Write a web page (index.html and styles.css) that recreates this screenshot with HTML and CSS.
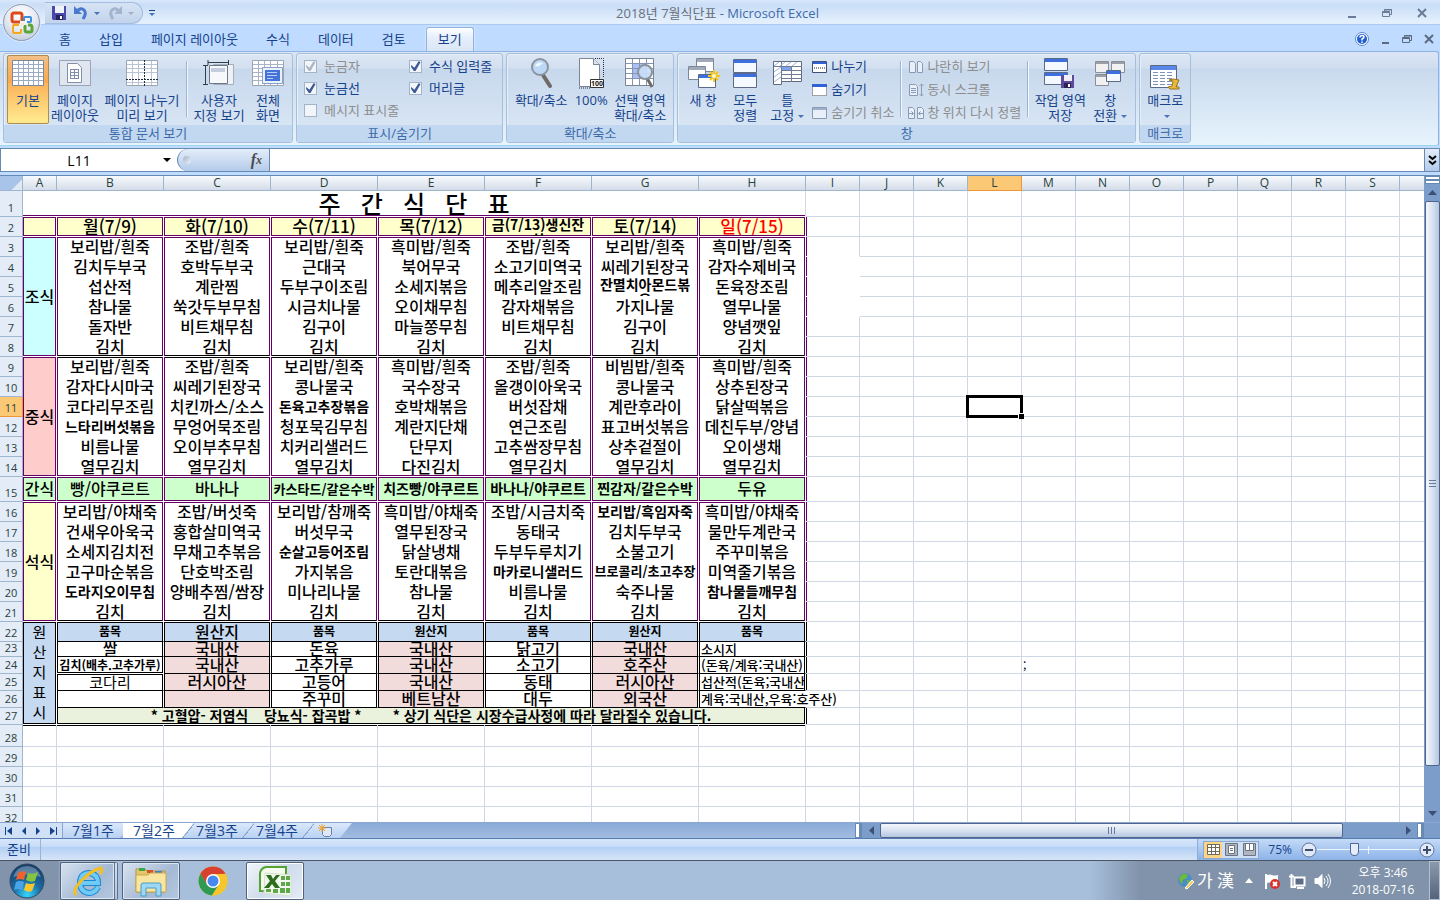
FILE: index.html
```html
<!DOCTYPE html>
<html lang="ko">
<head>
    <meta charset="UTF-8">
    <meta name="viewport" content="width=device-width, initial-scale=1.0">
    <title>2018년 7월식단표 - Microsoft Excel</title>
    <link rel="stylesheet" href="styles.css">
</head>
<body>
    <!-- Title bar -->
    <header class="titlebar">
        <button class="office" aria-label="Office 단추">
            <svg width="24" height="24" viewBox="0 0 24 24" fill="none">
                <path d="M10 11H4q-2 0-2-2V4q0-2 2-2h6q2 0 2 2v6" stroke="#dc4a1a" stroke-width="3"/>
                <path d="M14 10V7q0-1 1-1h5q1 0 1 1v3q0 1-1 1h-3" stroke="#3f8fd8" stroke-width="2"/>
                <path d="M9 14H4q-1 0-1 1v6q0 1 1 1h6q1 0 1-1v-3" stroke="#f6a81d" stroke-width="2"/>
                <path d="M15 14v5q0 2 2 2h3q2 0 2-2v-3q0-2-2-2h-2" stroke="#5ba63a" stroke-width="3"/>
                <path d="M11 12h3v3h-3z" fill="#f8e8c0"/>
            </svg>
        </button>
        <div class="quick">
            <button aria-label="저장"><svg width="14" height="14"><path d="M0 0h14v14H1L0 13z" fill="#4b49a8"/><path d="M3 0h9v7H3z" fill="#eef2fb"/><path d="M4 9h7v5H4z" fill="#22225c"/><path d="M8 10h2v3H8z" fill="#fff"/></svg></button>
            <button class="undo" aria-label="실행 취소"><svg width="14" height="14" fill="none"><path d="M3 5q4-4 7-1t-1 9" stroke="#4a78cf" stroke-width="3"/><path d="M0 0v8h8z" fill="#4a78cf"/></svg></button>
            <span class="caret"></span>
            <button class="redo" aria-label="다시 실행"><svg width="14" height="14" fill="none"><path d="M11 5Q7 1 4 4t1 9" stroke="#a3b4cc" stroke-width="3"/><path d="M14 0v8H6z" fill="#a3b4cc"/></svg></button>
            <span class="caret off"></span>
        </div>
        <button class="customize" aria-label="빠른 실행 도구 모음 사용자 지정"><i></i><span class="caret"></span></button>
        <h1><span>2018년 7월식단표</span> - Microsoft Excel</h1>
        <div class="winbtns">
            <button aria-label="최소화"><svg width="12" height="12"><path d="M2 9h8v2H2z" fill="#6b7c96"/></svg></button>
            <button aria-label="복원"><svg width="12" height="12" fill="none" stroke="#6b7c96"><path d="M3.500 4V2.500h7v5H9M1.500 4.500h7v5h-7zM1 5.500h8M3 3h8"/></svg></button>
            <button aria-label="닫기"><svg width="12" height="12"><path d="M2 2l8 8M10 2l-8 8" stroke="#6b7c96" stroke-width="2"/></svg></button>
        </div>
    </header>

    <!-- Ribbon tabs -->
    <nav class="tabs">
        <button>홈</button>
        <button>삽입</button>
        <button>페이지 레이아웃</button>
        <button>수식</button>
        <button>데이터</button>
        <button>검토</button>
        <button class="active">보기</button>
        <div class="docbtns">
            <button aria-label="도움말"><svg width="14" height="14"><circle cx="7" cy="7" r="6.500" fill="#fff" stroke="#5a86c8"/><circle cx="7" cy="7" r="5" fill="#1f5fd0"/><path d="M5 5.500q0-2 2-2t2 1.500Q9 6 7 7v1.500M7 9.500V11" stroke="#fff" stroke-width="1.500" fill="none"/></svg></button>
            <button aria-label="창 최소화"><svg width="12" height="12"><path d="M3 9h7v2H3z" fill="#5c6a80"/></svg></button>
            <button aria-label="창 복원"><svg width="12" height="12" fill="none" stroke="#5c6a80"><path d="M3.500 4V2.500h7v5H9M1.500 4.500h7v5h-7zM1 5.500h8M3 3h8"/></svg></button>
            <button aria-label="창 닫기"><svg width="12" height="12"><path d="M2 2l8 8M10 2l-8 8" stroke="#5c6a80" stroke-width="2"/></svg></button>
        </div>
    </nav>

    <!-- Ribbon -->
    <section class="ribbon">
        <div class="group">
            <div class="tools">
                <button class="big pressed w42">
                    <svg width="32" height="32"><path d="M.5 2.500h31v25H.5z" fill="#fff" stroke="#7c8798"/><path d="M1 6.500h30M1 10.500h30M1 14.500h30M1 18.500h30M1 22.500h30M6.500 3v24M11.500 3v24M16.500 3v24M21.500 3v24M26.500 3v24" stroke="#9aa9c4"/></svg>
                    <span>기본</span></button>
                <button class="big w52">
                    <svg width="32" height="32"><path d="M.5 2.500h31v25H.5z" fill="#dfe6f0" stroke="#9aa4b4"/><path d="M8.500 5.500h10l4 4v15h-14z" fill="#fff" stroke="#8390a6"/><path d="M11 11.500h9M11 14.500h9M11 17.500h9M11 20.500h9M11.500 11v10M15.500 11v10M19.500 11v10" stroke="#7f8ea8"/></svg>
                    <span>페이지<br>레이아웃</span></button>
                <button class="big w82">
                    <svg width="32" height="32"><path d="M.5 2.500h31v25H.5z" fill="#fff" stroke="#9aa4b4"/><path d="M1 6.500h30M1 10.500h30M1 14.500h30M1 24.500h30M6.500 3v24M12.500 3v24M25.500 3v24" stroke="#b9c4d6"/><path d="M18.500 2v26M0 21.500h32" stroke="#222c3c" stroke-dasharray="2 1"/></svg>
                    <span>페이지 나누기<br>미리 보기</span></button>
                <span class="sep"></span>
                <button class="big w56">
                    <svg width="32" height="32"><path d="M10.500 6.500h20v20h-20z" fill="#eef1f6" stroke="#a5adba"/><path d="M6.500 7.500h18v18h-18z" fill="#f6f8fb" stroke="#6d7888"/><path d="M8 10h14v4H8z" fill="#c3cddd"/><path d="M5 4.500h20M5 2v5M25.500 2v5M2.500 7v20M0 7.500h5M0 26.500h5" stroke="#333c4a"/></svg>
                    <span>사용자<br>지정 보기</span></button>
                <button class="big w42">
                    <svg width="32" height="32"><path d="M.5 2.500h31v25H.5z" fill="#fff" stroke="#9aa4b4"/><path d="M1 6.500h30M1 10.500h30M1 14.500h30M1 18.500h30M1 22.500h30M6.500 3v24M12.500 3v24M18.500 3v24M25.500 3v24" stroke="#a9b4c6"/><path d="M10.500 9.500h20v16h-20z" fill="#e9f1fd" stroke="#8aa0c4"/><path d="M13 12h15v11H13z" fill="#4474d8"/><path d="M15 14.500h10M15 17.500h10M15 20.500h6" stroke="#b8cef8"/></svg>
                    <span>전체<br>화면</span></button>
            </div>
            <h2>통합 문서 보기</h2>
        </div>

        <div class="group">
            <div class="tools checks">
                <label class="off"><input type="checkbox" checked disabled>눈금자</label>
                <label><input type="checkbox" checked>수식 입력줄</label>
                <label><input type="checkbox" checked>눈금선</label>
                <label><input type="checkbox" checked>머리글</label>
                <label class="off"><input type="checkbox" disabled>메시지 표시줄</label>
            </div>
            <h2>표시/숨기기</h2>
        </div>

        <div class="group">
            <div class="tools">
                <button class="big w62">
                    <svg width="32" height="32"><path d="M18 17l7 11" stroke="#6e6a68" stroke-width="4" stroke-linecap="round"/><circle cx="15" cy="9" r="8" fill="#bcd8f6" stroke="#8b939e" stroke-width="2"/><path d="M10 8q2-5 8-3-5 5-8 3" fill="#eef6ff"/></svg>
                    <span>확대/축소</span></button>
                <button class="big w38">
                    <svg width="32" height="32"><path d="M4.500.5h14l6 6v22h-20z" fill="#fff" stroke="#7c8594"/><path d="M18.500.5v6h6" fill="#dfe5ee" stroke="#7c8594"/><path d="M20 .5h8.500v19M4 30h11" stroke="#222c3c" stroke-dasharray="1 1" fill="none"/><path d="M15.500 21.500h13v8h-13z" fill="#fff" stroke="#333"/><text x="16" y="28" font-size="7" font-weight="700" fill="#222">100</text></svg>
                    <span>100%</span></button>
                <button class="big w60">
                    <svg width="32" height="32"><path d="M1.500.5h28v27h-28z" fill="#fff" stroke="#7c8594"/><path d="M8 6h14v14H8z" fill="#a9c0f4"/><path d="M2 5.500h27M2 10.500h27M2 15.500h27M2 20.500h27M8.500 1v26M15.500 1v26M22.500 1v26" stroke="#8593b4"/><path d="M23 20l5 9" stroke="#6e6a68" stroke-width="3"/><circle cx="21" cy="14" r="7" fill="#c9dff8" fill-opacity=".9" stroke="#8b939e" stroke-width="2"/></svg>
                    <span>선택 영역<br>확대/축소</span></button>
            </div>
            <h2>확대/축소</h2>
        </div>

        <div class="group">
            <div class="tools">
                <button class="big w44">
                    <svg width="32" height="32"><g stroke="#7c8798" fill="#fff"><path d="M9.500.5h17v13h-17z"/><path d="M1.500 8.500h17v13h-17z"/></g><path d="M10 1h16v3H10zM2 9h16v3H2z" fill="#a2aab8"/><path d="M11.500 16.500h17v13h-17z" fill="#fff" stroke="#5a6a88"/><path d="M12 17h16v3H12z" fill="#3c70e0"/><path d="M27 12v12M21 18h12M23 14l8 8M31 14l-8 8" stroke="#f5c51c" stroke-width="2"/><circle cx="27" cy="18" r="2" fill="#fffbd0"/></svg>
                    <span>새 창</span></button>
                <button class="big w40">
                    <svg width="32" height="32"><path d="M4.500 1.500h23v13h-23zM4.500 15.500h23v14h-23z" fill="#f4f8ff" stroke="#5a6a88"/><path d="M5 2h22v3H5zM5 16h22v3H5z" fill="#3c70e0"/></svg>
                    <span>모두<br>정렬</span></button>
                <button class="big w44">
                    <svg width="32" height="32"><path d="M2.500 3.500h28v20h-20v3h-8z" fill="#fff" stroke="#5f6b7c"/><path d="M3 8.500h28M10.500 4v20M10.500 12.500h20M10.500 16.500h20M10.500 20.500h20M20.500 8v16" stroke="#6f7c92"/><path d="M11 9h9v3h-9z" fill="#7da3f0"/><path d="M3 8l5-4M9 8l5-4M15 8l5-4M21 8l5-4M3 14l7-5M3 19l7-5M3 24l7-5" stroke="#9db4dc"/></svg>
                    <span>틀<br>고정<i class="caret"></i></span></button>
                <div class="small">
                    <button><svg width="16" height="16"><path d="M.5 2.500h14v11H.5z" fill="#fff" stroke="#3c5078"/><path d="M1 3h13v2H1z" fill="#2f62d4"/><path d="M2 9h11" stroke="#222" stroke-dasharray="1 1"/></svg>나누기</button>
                    <button><svg width="16" height="16"><path d="M.5 2.500h14v11H.5z" fill="#fff" stroke="#555" stroke-dasharray="1 1"/><path d="M0 2h15v3H0z" fill="#2f62d4"/></svg>숨기기</button>
                    <button class="off"><svg width="16" height="16"><path d="M.5 2.500h14v11H.5z" fill="#e9eff8" stroke="#8b9ab4"/><path d="M1 3h13v2H1z" fill="#9fb0cc"/></svg>숨기기 취소</button>
                </div>
                <span class="sep"></span>
                <div class="small">
                    <button class="off"><svg width="16" height="16" fill="#e9eff8" stroke="#8b9ab4"><path d="M1.500 2.500h4l2 2v9h-6zM9.500 2.500h3l2 2v9h-5z"/></svg>나란히 보기</button>
                    <button class="off"><svg width="16" height="16" fill="#e9eff8" stroke="#8b9ab4"><path d="M1.500 2.500h6l2 2v9h-8zM3 6.500h5M3 8.500h5M3 10.500h5M13.500 2v12M11.500 4l2-2 2 2M11.500 12l2 2 2-2"/></svg>동시 스크롤</button>
                    <button class="off"><svg width="16" height="16" fill="#e9eff8" stroke="#8b9ab4"><path d="M.5 2.500h4l2 2v9h-6zM9.500 2.500h4l2 2v9h-6zM1 8.500h4M3.500 6.500l2 2-2 2M15 8.500h-4M12.500 6.500l-2 2 2 2"/></svg>창 위치 다시 정렬</button>
                </div>
                <span class="sep"></span>
                <button class="big w56">
                    <svg width="32" height="32"><path d="M.5.5h23v12H.5zM.5 14.500h23v12H.5z" fill="#f4f8ff" stroke="#5a6a88"/><path d="M1 1h22v3H1zM1 15h22v3H1z" fill="#3c70e0"/><path d="M17 17h13v13H17z" fill="#5d4a9c"/><path d="M20 17h8v6h-8z" fill="#f0eefa"/><path d="M20 25h7v5h-7z" fill="#2c2354"/><path d="M24 26h2v3h-2z" fill="#fff"/></svg>
                    <span>작업 영역<br>저장</span></button>
                <button class="big w44">
                    <svg width="32" height="32"><path d="M1.500 3.500h13v11h-13zM17.500 3.500h13v11h-13zM1.500 16.500h13v11h-13z" fill="#f1f1f1" stroke="#8a8f98"/><path d="M2 4h12v2H2zM18 4h12v2H18zM2 17h12v2H2z" fill="#9a9fa8"/><path d="M12.500 12.500h14v11h-14z" fill="#f4f8ff" stroke="#5a6a88"/><path d="M13 13h13v3H13z" fill="#3c70e0"/></svg>
                    <span>창<br>전환<i class="caret"></i></span></button>
            </div>
            <h2>창</h2>
        </div>

        <div class="group">
            <div class="tools">
                <button class="big w44">
                    <svg width="32" height="32"><path d="M1.500 7.500h26v22h-26z" fill="#fff" stroke="#5a6a88"/><path d="M2 8h25v4H2z" fill="#5a86e8"/><path d="M4 14.500h20M4 17.500h20M4 20.500h20M4 23.500h20M4 26.500h20" stroke="#7f93bc" stroke-dasharray="5 2"/><path d="M20 22q4-2 10 0l-3 7q4-1 3 2h-9l-2-2 4-1 1-5z" fill="#e8b83a" stroke="#9a741c"/></svg>
                    <span>매크로<br><i class="caret"></i></span></button>
            </div>
            <h2>매크로</h2>
        </div>
    </section>

    <!-- Formula bar -->
    <section class="formula">
        <input class="namebox" value="L11" aria-label="이름 상자">
        <span class="caret dark"></span>
        <div class="fx"><i></i><button aria-label="함수 삽입">f<small>x</small></button></div>
        <input class="entry" aria-label="수식 입력줄">
        <button class="expand" aria-label="수식 입력줄 확장"><svg width="9" height="11" fill="none" stroke="#000" stroke-width="2"><path d="M1 1l3.500 3L8 1M1 6l3.500 3L8 6"/></svg></button>
    </section>

    <!-- Worksheet -->
    <main class="work">
        <div class="sheet">
            <table id="grid"></table>
        </div>
        <div class="vscroll">
            <span class="split"></span>
            <button aria-label="위로"><svg width="9" height="5"><path d="M0 5l4.500-5L9 5z" fill="#3c4f74"/></svg></button>
            <div class="thumb"></div>
            <div class="track"></div>
            <button aria-label="아래로"><svg width="9" height="5"><path d="M0 0l4.500 5L9 0z" fill="#3c4f74"/></svg></button>
        </div>
    </main>

    <!-- Sheet tabs and horizontal scroll -->
    <section class="bottombar">
        <div class="navs">
            <button aria-label="첫 시트"><svg width="8" height="8" fill="#15428b"><path d="M0 0h1v8H0zM7 0v8L2 4z"/></svg></button>
            <button aria-label="이전 시트"><svg width="8" height="8" fill="#15428b"><path d="M6 0v8L2 4z"/></svg></button>
            <button aria-label="다음 시트"><svg width="8" height="8" fill="#15428b"><path d="M2 0v8l4-4z"/></svg></button>
            <button aria-label="마지막 시트"><svg width="8" height="8" fill="#15428b"><path d="M1 0v8l5-4zM7 0h1v8H7z"/></svg></button>
        </div>
        <div class="sheettabs">
            <button class="first">7월1주</button>
            <button class="active">7월2주</button>
            <button>7월3주</button>
            <button>7월4주</button>
            <button class="new" aria-label="새 시트"><svg width="15" height="13"><path d="M4.500 3.500h9v7l-2 2h-5l-2-2z" fill="#dfe8f6" stroke="#6d80a4"/><path d="M4 0v8M0 4h8M1 1l6 6M7 1L1 7" stroke="#f0a020"/></svg></button>
        </div>
        <div class="hscroll">
            <span class="split"></span>
            <button aria-label="왼쪽으로"><svg width="5" height="9"><path d="M5 0v9L0 4.500z" fill="#3c4f74"/></svg></button>
            <div class="thumb"></div>
            <div class="track"></div>
            <button aria-label="오른쪽으로"><svg width="5" height="9"><path d="M0 0v9l5-4.500z" fill="#3c4f74"/></svg></button>
            <span class="split"></span>
        </div>
    </section>

    <!-- Status bar -->
    <footer class="status">
        <span class="ready">준비</span>
        <div class="zoombox">
            <div class="views">
                <button class="on" aria-label="기본 보기"><svg width="13" height="11" fill="#fff" stroke="#6d6a5c"><path d="M.5.5h12v10H.5zM.5 3.500h12M.5 7.500h12M4.500.5v10M8.500.5v10"/></svg></button>
                <button aria-label="페이지 레이아웃 보기"><svg width="13" height="13" fill="#fff" stroke="#6b7480"><path d="M.5.500h12v12H.5z" fill="#aeb6c2"/><path d="M3.500 2.500h6v8h-6zM5 5.500h3M5 7.500h3"/></svg></button>
                <button aria-label="페이지 나누기 보기"><svg width="13" height="13" fill="#fff" stroke="#6b7480"><path d="M.5.500h12v12H.5z" fill="#aeb6c2"/><path d="M2.500.500h4v7h-4zM6.500.500h4v7h-4z"/></svg></button>
            </div>
            <span class="percent">75%</span>
            <button class="round" aria-label="축소"><svg width="16" height="16"><circle cx="8" cy="8" r="7" fill="#dfe9f7" stroke="#5f7699"/><path d="M4 8h8" stroke="#3d4f6c" stroke-width="2"/></svg></button>
            <input type="range" min="0" max="100" value="36" aria-label="확대/축소">
            <button class="round" aria-label="확대"><svg width="16" height="16"><circle cx="8" cy="8" r="7" fill="#dfe9f7" stroke="#5f7699"/><path d="M4 8h8M8 4v8" stroke="#3d4f6c" stroke-width="2"/></svg></button>
        </div>
    </footer>

    <!-- Taskbar -->
    <footer class="taskbar">
        <button class="start" aria-label="시작">
            <svg width="36" height="36" viewBox="0 0 36 36">
                <defs><radialGradient id="orb" cx=".5" cy=".9" r=".9"><stop offset="0" stop-color="#35d6ff"/><stop offset=".45" stop-color="#1c6ca4"/><stop offset="1" stop-color="#123a66"/></radialGradient></defs>
                <circle cx="18" cy="18" r="17" fill="url(#orb)" stroke="#34485f"/>
                <path d="M4 14Q8 3 18 3t14 11q-14-5-28 0" fill="#fff" opacity=".3"/>
                <path d="M9 10q4-3 8-1l-2 8q-4-2-8 0z" fill="#f0622c"/>
                <path d="M19 10q5 2 10-1l-3 9q-4 2-9-1z" fill="#86c440"/>
                <path d="M7 19q4-2 8 0l-2 8q-4-2-8 0z" fill="#4ba4ea"/>
                <path d="M17 20q4 2 9 0l-3 8q-4 2-8-1z" fill="#fbc62c"/>
            </svg>
        </button>
        <button class="task stack" aria-label="Internet Explorer">
            <svg width="32" height="32" viewBox="0 0 32 32" fill="none">
                <path d="M26 22q-3 6-9 6-9-1-9-11 1-9 9-9 9 1 9 10H10" stroke="#1f86d0" stroke-width="6"/>
                <path d="M26 22q-3 6-9 6-9-1-9-11 1-9 9-9 9 1 9 10H10" stroke="#6ecbf6" stroke-width="4"/>
                <path d="M4 30q-4-5 6-15T29 3q2 2-1 6" stroke="#f3bf22" stroke-width="3"/>
            </svg>
        </button>
        <button class="task" aria-label="탐색기">
            <svg width="34" height="32" viewBox="0 0 34 32">
                <path d="M2 4h9l2 2h18v21H2z" fill="#e6c66a" stroke="#b8943c"/>
                <path d="M5 3h6v3H5z" fill="#3aa84a"/><path d="M13 5h6v3h-6z" fill="#d8502c"/><path d="M21 6h7v3h-7z" fill="#3c80d0"/>
                <path d="M2 10h12l2-2h16v19H2z" fill="#f8e6a0" stroke="#c8a850"/>
                <path d="M7 31V20q0-2 2-2h16q2 0 2 2v11h-5v-8H12v8z" fill="#9cd8f4" stroke="#4a9cc8"/>
            </svg>
        </button>
        <button class="task plain" aria-label="Chrome">
            <svg width="30" height="30" viewBox="0 0 30 30">
                <circle cx="15" cy="15" r="14.500" fill="#f7c52c"/>
                <path d="M2.400 7.800A14.500 14.500 0 0 1 27.600 7.800L15 8.500 8.700 18.600z" fill="#d8402f"/>
                <path d="M2.400 7.800A14.500 14.500 0 0 0 14 29.500L21 18.500 9 18.500z" fill="#2f9a54"/>
                <path d="M15 8h12.600a14.500 14.500 0 0 1-13.600 21.500L21 18.500z" fill="#f7c52c"/>
                <circle cx="15" cy="15" r="7" fill="#fff"/><circle cx="15" cy="15" r="5.500" fill="#4688ee"/>
            </svg>
        </button>
        <button class="task active" aria-label="Excel">
            <svg width="32" height="32" viewBox="0 0 32 32">
                <path d="M7 2h20v24H1V8q1-5 6-6z" fill="#f4faee" stroke="#54a330" stroke-width="2"/>
                <path d="M6 8l26 2v21L5 28z" fill="#f2f7ef" stroke="#d4e2cc"/>
                <path d="M7 10h5l2 4 3-4h4l-5 6 5 7h-5l-3-4-3 4H5l6-7z" fill="#2c6e1e"/>
                <path d="M22 11h4v4h-4zM27 11h4v4h-4zM22 17h4v4h-4zM27 17h4v4h-4zM7 24h5v3H7zM14 24h5v4h-5zM21 23h5v5h-5zM27 23h4v5h-4z" fill="#5ea848"/>
            </svg>
        </button>
        <div class="tray">
            <svg width="18" height="18"><circle cx="8" cy="8" r="7" fill="#4a8cc8"/><path d="M2 6q3-6 8-4 2 4-2 5t-2 5q-4-1-4-6M10 8q3 0 4 2l-3 4z" fill="#6cb840"/><path d="M8 16l7-8 2 2-7 7z" fill="#f8c860" stroke="#fff"/></svg>
            <span class="ime">가 漢</span>
            <svg class="up" width="8" height="5"><path d="M0 5l4-5 4 5z" fill="#fff"/></svg>
            <svg width="17" height="18"><path d="M2 2v15" stroke="#fff" stroke-width="2"/><path d="M3 3q3-1 5 0t6 0v8q-3 1-6 0t-5 0z" fill="#fff"/><circle cx="11" cy="12" r="5" fill="#d8302c"/><path d="M9 10l4 4M13 10l-4 4" stroke="#fff" stroke-width="2"/></svg>
            <svg width="17" height="16" fill="none" stroke="#fff"><path d="M5.500 4.500h10v8h-10z" fill="#5b6c86" stroke-width="2"/><path d="M2.500 1v4M0 3.500h5M2.500 5v9H7M8 15h7" stroke-width="2"/></svg>
            <svg width="17" height="16" fill="none" stroke="#fff"><path d="M1 5.500h3l4-4v13l-4-4H1z" fill="#fff"/><path d="M10 5q2 3 0 6M12 3q4 5 0 10M14 1q5 7 0 14"/></svg>
            <div class="clock">오후 3:46<br>2018-07-16</div>
            <button class="desktop" aria-label="바탕 화면 보기"></button>
        </div>
    </footer>

    <script>
        const letters = 'ABCDEFGHIJKLMNOPQRST'.split('');

        // Row heights in pixels, 20 unless listed
        const heights = { 1: 26, 15: 25, 23: 15, 24: 17, 25: 17, 26: 17, 27: 17, 28: 22 };

        // Columns B to H
        const rows = {
            2: ['월(7/9)', '화(7/10)', '수(7/11)', '목(7/12)', '금(7/13)생신잔치', '토(7/14)', '일(7/15)'],
            3: ['보리밥/흰죽', '조밥/흰죽', '보리밥/흰죽', '흑미밥/흰죽', '조밥/흰죽', '보리밥/흰죽', '흑미밥/흰죽'],
            4: ['김치두부국', '호박두부국', '근대국', '북어무국', '소고기미역국', '씨레기된장국', '감자수제비국'],
            5: ['섭산적', '계란찜', '두부구이조림', '소세지볶음', '메추리알조림', '잔멸치아몬드볶음', '돈육장조림'],
            6: ['참나물', '쑥갓두부무침', '시금치나물', '오이채무침', '감자채볶음', '가지나물', '열무나물'],
            7: ['돌자반', '비트채무침', '김구이', '마늘쫑무침', '비트채무침', '김구이', '양념깻잎'],
            8: ['김치', '김치', '김치', '김치', '김치', '김치', '김치'],
            9: ['보리밥/흰죽', '조밥/흰죽', '보리밥/흰죽', '흑미밥/흰죽', '조밥/흰죽', '비빔밥/흰죽', '흑미밥/흰죽'],
            10: ['감자다시마국', '씨레기된장국', '콩나물국', '국수장국', '올갱이아욱국', '콩나물국', '상추된장국'],
            11: ['코다리무조림', '치킨까스/소스', '돈육고추장볶음', '호박채볶음', '버섯잡채', '계란후라이', '닭살떡볶음'],
            12: ['느타리버섯볶음', '무엉어묵조림', '청포묵김무침', '계란지단채', '연근조림', '표고버섯볶음', '데친두부/양념'],
            13: ['비름나물', '오이부추무침', '치커리샐러드', '단무지', '고추쌈장무침', '상추겉절이', '오이생채'],
            14: ['열무김치', '열무김치', '열무김치', '다진김치', '열무김치', '열무김치', '열무김치'],
            15: ['빵/야쿠르트', '바나나', '카스타드/갈은수박', '치즈빵/야쿠르트', '바나나/야쿠르트', '찐감자/갈은수박', '두유'],
            16: ['보리밥/야채죽', '조밥/버섯죽', '보리밥/참깨죽', '흑미밥/야채죽', '조밥/시금치죽', '보리밥/흑임자죽', '흑미밥/야채죽'],
            17: ['건새우아욱국', '홍합살미역국', '버섯무국', '열무된장국', '동태국', '김치두부국', '물만두계란국'],
            18: ['소세지김치전', '무채고추볶음', '순살고등어조림', '닭살냉채', '두부두루치기', '소불고기', '주꾸미볶음'],
            19: ['고구마순볶음', '단호박조림', '가지볶음', '토란대볶음', '마카로니샐러드', '브로콜리/초고추장', '미역줄기볶음'],
            20: ['도라지오이무침', '양배추찜/쌈장', '미나리나물', '참나물', '비름나물', '숙주나물', '참나물들깨무침'],
            21: ['김치', '김치', '김치', '김치', '김치', '김치', '김치'],
            22: ['품목', '원산지', '품목', '원산지', '품목', '원산지', '품목'],
            23: ['쌀', '국내산', '돈육', '국내산', '닭고기', '국내산', '소시지'],
            24: ['김치(배추.고추가루)', '국내산', '고추가루', '국내산', '소고기', '호주산', '(돈육/계육:국내산)'],
            25: ['코다리', '러시아산', '고등어', '국내산', '동태', '러시아산', '섭산적(돈육;국내산'],
            26: ['', '', '주꾸미', '베트남산', '대두', '외국산', '계육:국내산,우육:호주산)']
        };

        // Merged cells in column A: [rows, text, class]
        const merged = {
            2: [1, '', 'yellow'],
            3: [6, '조식', 'cyan'],
            9: [6, '중식', 'rose'],
            15: [1, '간식', 'green'],
            16: [6, '석식', 'yellow'],
            22: [6, '원<br>산<br>지<br>표<br>시', 'blue upright']
        };

        // Cells that do not use the normal text size
        const sizes = {
            F2: 'medium wrap', G5: 'medium wrap', D11: 'medium', B12: 'medium', D15: 'tight', E15: 'medium', F15: 'medium',
            G15: 'medium', G16: 'medium', D18: 'medium', F19: 'medium', G19: 'tight', B20: 'medium', H20: 'medium',
            B22: 'tiny', D22: 'tiny', E22: 'tiny', F22: 'tiny', G22: 'tiny', H22: 'tiny', B24: 'tiny split', B25: 'plain split-top'
        };

        function cell(col, r) {
            const id = col + r;
            const index = letters.indexOf(col);
            if (index > 0 && index < 8) {
                if (r === 27) {
                    return col === 'B' ? '<td colspan="7" class="note"><div>* 고혈압- 저염식    당뇨식- 잡곡밥 *        * 상기 식단은 시장수급사정에 따라 달라질수 있습니다.</div></td>' : '';
                }
                if (rows[r]) {
                    const pink = r > 22 && 'CEG'.includes(col) ? 'pink' : '';
                    const left = r > 22 && col === 'H' ? 'left' : '';
                    return `<td class="box ${pink} ${left} ${sizes[id] || ''}"><div>${rows[r][index - 1]}</div></td>`;
                }
            }
            if (id === 'L11') return '<td class="selected"></td>';
            if (id === 'M24') return '<td class="mark"><div>;</div></td>';
            return `<td class="c${col}"></td>`;
        }

        let html = '<colgroup><col class="w-head"><col class="w-a">' + '<col class="w-menu">'.repeat(7) + '<col class="w-std">'.repeat(12) + '</colgroup>';
        html += '<thead><tr><th class="corner"></th>' + letters.map(l => `<th class="${l === 'L' ? 'on' : ''}">${l === 'T' ? '' : l}</th>`).join('') + '</tr></thead><tbody>';
        for (let r = 1; r <= 32; r++) {
            html += `<tr class="r${r}" style="--h:${heights[r] || 20}px"><th class="${r === 11 ? 'on' : ''}">${r}</th>`;
            if (r === 1) {
                html += '<td colspan="8" class="title"><div>주   간   식   단   표</div></td>';
                html += letters.slice(8).map(l => cell(l, r)).join('');
            } else {
                if (merged[r]) {
                    html += `<td rowspan="${merged[r][0]}" class="side ${merged[r][2]}">${merged[r][1]}</td>`;
                } else if (r > 27) {
                    html += '<td class="cA"></td>';
                }
                html += letters.slice(1).map(l => cell(l, r)).join('');
            }
            html += '</tr>';
        }
        document.getElementById('grid').innerHTML = html + '</tbody>';
    </script>
</body>
</html>
```
FILE: styles.css
```css
* {
    box-sizing: border-box;
}
body {
    display: flex;
    flex-direction: column;
    height: 100vh;
    margin: 0;
    overflow: hidden;
    background: #bfdbff;
    font-family: "Open Sans", "Noto Sans CJK KR", sans-serif;
    font-size: 13px;
    line-height: 15px;
    color: #15428b;
}
button {
    display: flex;
    align-items: center;
    justify-content: center;
    padding: 0;
    border: 0;
    background: none;
    font: inherit;
    color: inherit;
    white-space: nowrap;
    flex-shrink: 0;
}
svg {
    display: block;
    flex-shrink: 0;
    overflow: visible;
}
h1, h2 {
    margin: 0;
    font-weight: 400;
}
.caret {
    display: inline-block;
    width: 0;
    border: 3px solid transparent;
    border-top-color: #4a72b8;
    border-bottom: 0;
    flex-shrink: 0;
}
.caret.off {
    border-top-color: #9fb0c8;
}
.caret.dark {
    border-width: 4px;
    border-bottom: 0;
    border-top-color: #000;
}

/* Title bar */
.titlebar {
    position: relative;
    display: flex;
    align-items: center;
    height: 25px;
    flex-shrink: 0;
    padding: 2px 6px 0 45px;
    background: linear-gradient(#d9e8fb, #c9ddf6 20%, #e3effd 90%);
    border-bottom: 1px solid #abc9f0;
}
.office {
    position: absolute;
    left: 3px;
    top: 4px;
    z-index: 2;
    width: 37px;
    height: 37px;
    border: 1px solid #8a9ab2;
    border-radius: 50%;
    background: radial-gradient(circle at 50% 30%, #fff, #e4e9f1 50%, #b4bfd0);
    box-shadow: 0 0 0 1px #dde8f6;
}
.quick {
    display: flex;
    align-items: center;
    gap: 6px;
    height: 22px;
    padding: 0 8px 0 7px;
    border: 1px solid #a4bde0;
    border-left: 0;
    border-radius: 0 11px 11px 0;
    background: linear-gradient(#d6e3f4, #c2d4ec);
}
.undo, .redo {
    margin-left: 2px;
}
.customize {
    flex-direction: column;
    gap: 2px;
    margin-left: 6px;
}
.customize i {
    width: 6px;
    border-top: 1px solid #15428b;
}
.titlebar h1 {
    flex: 1;
    padding-right: 66px;
    text-align: center;
    font-size: 13px;
    color: #3e6aaa;
}
.titlebar h1 span {
    color: #696f7a;
}
.winbtns {
    display: flex;
    gap: 23px;
    padding-right: 6px;
}

/* Ribbon tabs */
.tabs {
    display: flex;
    align-items: stretch;
    height: 26px;
    flex-shrink: 0;
    padding: 2px 5px 0 45px;
}
.tabs > button {
    padding: 0 14px;
}
.tabs > .active {
    margin-left: 6px;
    padding: 0 11px;
    border: 1px solid #8db2e3;
    border-bottom: 0;
    border-radius: 3px 3px 0 0;
    background: linear-gradient(#fff, #e6effb 40%, #dbe6f4);
    box-shadow: 0 0 2px #fff;
}
.docbtns {
    display: flex;
    align-items: center;
    gap: 10px;
    margin-left: auto;
}

/* Ribbon */
.ribbon {
    display: flex;
    gap: 3px;
    height: 95px;
    flex-shrink: 0;
    margin-right: 1px;
    padding: 1px 3px 2px;
    border: 1px solid #8db2e3;
    border-left: 0;
    border-radius: 0 3px 3px 0;
    background: linear-gradient(#dbe6f4, #cfddef 17%, #c9d9ed 18%, #e7f4fd);
    border-bottom-color: #9fd6ee;
}
.group {
    display: flex;
    flex-direction: column;
    border: 1px solid #a5bfdd;
    border-radius: 3px;
    background: linear-gradient(#dce6f3, #d3e0f0 16%, #c8d8ec 17%, #dbe8f6);
    box-shadow: inset 1px 1px #e6eef8;
    overflow: hidden;
}
.group h2 {
    flex: 1;
    line-height: 17px;
    font-size: 13px;
    text-align: center;
    color: #3e6aaa;
    background: #c1d8f0;
}
.tools {
    display: flex;
    height: 71px;
    padding: 1px 3px;
}
.big {
    flex-direction: column;
    justify-content: flex-start;
    gap: 3px;
    height: 69px;
    padding-top: 3px;
}
.big .caret {
    margin-left: 4px;
    vertical-align: middle;
}
.big svg text {
    font-family: "Noto Sans", sans-serif;
}
.pressed {
    border: 1px solid #b08d4e;
    border-radius: 2px;
    padding-top: 2px;
    background: linear-gradient(#f2c087, #f9a84e 38%, #fbb25a 40%, #ffe78c 95%);
}
.w38 { width: 38px; }
.w40 { width: 40px; }
.w42 { width: 42px; }
.w44 { width: 44px; }
.w52 { width: 52px; }
.w56 { width: 56px; }
.w60 { width: 60px; }
.w62 { width: 62px; }
.w82 { width: 82px; }
.sep {
    width: 2px;
    height: 56px;
    margin: 6px 3px 0;
    border-left: 1px solid #9ab4d4;
    background: #f2f7fd;
}
.tools.checks {
    display: grid;
    grid-template-columns: 105px auto;
    grid-template-rows: 22px 22px 22px;
    padding: 1px 10px 0 7px;
}
.checks label {
    display: flex;
    align-items: center;
    gap: 7px;
    white-space: nowrap;
}
.checks input {
    appearance: none;
    width: 13px;
    height: 13px;
    margin: 0;
    border: 1px solid #a4b4c8;
    background: #f2f5f9;
}
.checks input:checked::before {
    content: "";
    display: block;
    height: 11px;
    background: #3c5a94;
    clip-path: polygon(10% 40%, 40% 65%, 80% 5%, 95% 15%, 50% 95%, 35% 95%, 10% 60%);
}
.checks .off input::before {
    background: #a9b5c6;
}
.off {
    color: #8d8d8d;
}
.small {
    display: flex;
    flex-direction: column;
    padding: 0 3px;
}
.small button {
    gap: 3px;
    height: 23px;
    justify-content: flex-start;
}

/* Formula bar */
.formula {
    display: flex;
    align-items: center;
    height: 24px;
    flex-shrink: 0;
    margin: 2px 0 3px;
    border: 1px solid #668ab4;
    background: #fff;
}
.formula input {
    height: 100%;
    border: 0;
    padding: 0;
    background: none;
    font: inherit;
    color: #000;
}
.formula .namebox {
    width: 162px;
    padding-right: 6px;
    text-align: center;
    font-size: 14px;
}
.fx {
    display: flex;
    align-items: center;
    justify-content: space-between;
    width: 93px;
    height: 100%;
    margin-left: 6px;
    padding: 0 7px 0 5px;
    border-left: 1px solid #668ab4;
    border-right: 1px solid #668ab4;
    border-radius: 11px 0 0 11px;
    background: linear-gradient(#e4edf9, #b4cbea);
}
.fx i {
    width: 8px;
    height: 8px;
    border-radius: 50%;
    background: linear-gradient(135deg, #a4b2c8, #eef3fa);
}
.fx button {
    font: italic bold 16px "Liberation Serif", serif;
    color: #4c4c4c;
}
.fx small {
    font-size: 12px;
}
.formula .entry {
    flex: 1;
    min-width: 0;
}
.expand {
    width: 15px;
    height: 100%;
    border-left: 1px solid #668ab4;
    background: linear-gradient(#e4edf9, #b4cbea);
}

/* Worksheet grid */
.work {
    display: flex;
    flex: 1;
    min-height: 0;
    border-top: 1px solid #668ab4;
}
.sheet {
    flex: 1;
    min-width: 0;
    overflow: hidden;
    background: #fff;
}
#grid {
    table-layout: fixed;
    width: 1454px;
    border-collapse: separate;
    border-spacing: 0;
    font-family: "Noto Sans CJK KR", sans-serif;
    font-size: 16px;
    font-weight: 500;
    color: #000;
}
.w-head { width: 23px; }
.w-a { width: 34px; }
.w-menu { width: 107px; }
.w-std { width: 54px; }
#grid th {
    height: 15px;
    padding: 0;
    border-right: 1px solid #9eb6ce;
    border-bottom: 1px solid #9eb6ce;
    font: 400 12px/12px "Open Sans", sans-serif;
    color: #27413e;
}
#grid thead th {
    background: linear-gradient(#f8fbfd, #d5dce8);
}
#grid thead .corner {
    background: linear-gradient(135deg, #a9c4e9 70%, #dfe9f5 70%);
}
#grid tbody th {
    padding-bottom: 2px;
    background: #e4ecf7;
    font-size: 11px;
    vertical-align: bottom;
}
#grid thead .on, #grid tbody .on {
    background: #fbc876;
    border-color: #f29536;
}
#grid tbody tr {
    height: var(--h);
}
#grid td {
    --l: transparent;
    --r: transparent;
    --t: transparent;
    --b: transparent;
    padding: 0;
    border-right: 1px solid #d0d7e5;
    border-bottom: 1px solid #d0d7e5;
    box-shadow: inset 1px 0 var(--l), inset -1px 0 var(--r), inset 0 1px var(--t), inset 0 -1px var(--b);
    text-align: center;
    vertical-align: top;
    white-space: nowrap;
}
#grid td div {
    height: calc(var(--h) - 1px);
    line-height: calc(var(--h) - 2px);
}
#grid td.title {
    --b: #606;
    border-bottom-color: #fff;
}
#grid .title div {
    overflow: hidden;
    font-size: 24px;
    white-space: pre;
}

/* Double frames: each cell draws its own edge beside a white line */
#grid .box, #grid .side {
    --l: #606;
    --r: #606;
    border-color: #fff;
}
#grid .box {
    border-bottom-width: 0;
}
#grid .r2 .box, #grid .r8 .box, #grid .r14 .box, #grid .r15 .box, #grid .r21 .box,
#grid .r22 .box, #grid .r23 .box, #grid .r24 .box, #grid .r25 .box, #grid .r26 .box {
    border-bottom-width: 1px;
}
#grid .side {
    --t: #606;
    --b: #606;
    padding-bottom: 2px;
    line-height: 20px;
    vertical-align: middle;
}
#grid .r2 .box, #grid .r15 .box {
    --t: #606;
    --b: #606;
}
#grid .r2 .box, #grid .yellow { background: #ffc; }
#grid .cyan { background: #cff; }
#grid .rose { background: #fcc; }
#grid .r15 .box, #grid .green { background: #cfc; }
#grid .r22 .box, #grid .blue { background: #c5d9f1; }
#grid .pink { background: #f2dcdb; }
#grid .r2 .box {
    font-size: 17px;
}
#grid .r2 .box:nth-child(9) {
    color: #f00;
}
#grid .r3 .box, #grid .r16 .box { --t: #606; }
#grid .r14 .box { --b: #606; }
#grid .r8 .box { --b: #000; }
#grid .r9 .box { --t: #000; }
#grid .r21 .box { --b: #000; }
#grid .r22 .box, #grid .r23 .box, #grid .r24 .box, #grid .r25 .box, #grid .r26 .box {
    --l: #000;
    --r: #000;
    border-bottom-color: #000;
}
#grid .r22 .box { --t: #000; }
#grid .side.blue {
    --l: #000;
    --r: #000;
    --t: #000;
    --b: #000;
}
#grid .note {
    --l: #000;
    --r: #000;
    --b: #000;
    border-color: #fff;
    background: #eaf1dd;
    font-size: 14px;
    font-weight: 700;
    white-space: pre;
}
#grid .r28 td:nth-child(-n+9) { --t: #000; }
#grid .cI { --l: #606; }
#grid .r2 .cI, #grid .r7 .cI, #grid .r8 .cI { --l: #606; }
#grid .r1 .cI, #grid .r28 ~ tr .cI, #grid .r28 .cI, #grid .r26 .cI { --l: transparent; }
#grid .r22 .cI, #grid .r23 .cI, #grid .r24 .cI, #grid .r25 .cI, #grid .r27 .cI { --l: #000; }
#grid .r3 .cI, #grid .r4 .cI, #grid .r5 .cI, #grid .r6 .cI { border-bottom-color: #fff; }
#grid .r4 .cI, #grid .r5 .cI, #grid .r6 .cI { border-right-color: #fff; }
#grid .r26 .left { --r: transparent; }

#grid .medium { font-size: 14px; font-weight: 700; }
#grid .tight { font-size: 13px; font-weight: 700; }
#grid .tiny { font-size: 12px; font-weight: 700; }
#grid .plain { font-size: 15px; font-weight: 400; }
#grid .r2 .wrap { font-size: 14px; }
#grid .wrap div {
    padding: 0 6px;
    overflow: hidden;
    line-height: 15px;
    white-space: normal;
    word-break: break-all;
}
#grid .r24 .split {
    --b: #000;
    border-bottom-color: #fff;
}
#grid .split-top { --t: #000; }
#grid .left {
    padding-left: 2px;
    text-align: left;
    font-size: 13px;
}
#grid .r25 .left div {
    margin-right: 1px;
    overflow: hidden;
}
#grid .upright {
    font-size: 15px;
    font-weight: 400;
}
#grid .mark {
    padding-left: 1px;
    text-align: left;
    font-size: 12px;
    font-weight: 400;
}
#grid .selected {
    position: relative;
}
#grid .selected::before {
    content: "";
    position: absolute;
    inset: -2px;
    border: 3px solid #000;
}
#grid .selected::after {
    content: "";
    position: absolute;
    right: -3px;
    bottom: -3px;
    width: 5px;
    height: 5px;
    background: #000;
    box-shadow: -1px -1px #fff;
}

/* Scroll bars */
.vscroll {
    display: flex;
    flex-direction: column;
    width: 16px;
    padding-left: 1px;
    background: #7c9cc9;
}
.vscroll .split {
    height: 8px;
    border: 1px solid #668ab4;
    background: linear-gradient(#fff 35%, #668ab4 35% 60%, #fff 60%);
}
.vscroll button {
    height: 17px;
}
.vscroll .thumb {
    flex: 1;
    border: 1px solid #51658c;
    border-radius: 2px;
    background: linear-gradient(#66799b 1px, transparent 1px 3px, #66799b 3px 4px, transparent 4px 6px, #66799b 6px 7px, transparent 7px) center / 7px 8px no-repeat, linear-gradient(90deg, #f4f7fb, #d8e2f0 50%, #b4c6e0);
}
.vscroll .track {
    height: 39px;
}
.bottombar {
    display: flex;
    height: 16px;
    flex-shrink: 0;
    border-top: 1px solid #8ba6cf;
    background: linear-gradient(#8aaad8, #a3bce0);
}
.navs {
    display: flex;
    justify-content: space-between;
    width: 62px;
    padding: 0 5px;
    background: #cfe0f7;
}
.sheettabs {
    display: flex;
}
.sheettabs button {
    width: 73px;
    margin-left: -13px;
    padding-right: 3px;
    background: linear-gradient(to bottom right, transparent 45%, #7f9fcf 45% 55%, transparent 55%) 0 0 / 12px 100% no-repeat, linear-gradient(#dbe8fa, #b9d2f4);
    font-size: 14px;
    clip-path: polygon(12px 0, 100% 0, calc(100% - 12px) 100%, 0 100%);
}
.sheettabs .first {
    width: 61px;
    margin-left: 0;
    padding-right: 0;
    border-left: 1px solid #8ba6cf;
    background: linear-gradient(#dbe8fa, #b9d2f4);
    clip-path: polygon(0 0, 100% 0, 100% 80%, calc(100% - 4px) 100%, 0 100%);
}
.sheettabs .active {
    width: 72px;
    margin-left: 0;
    padding-right: 10px;
    background: #fff;
    clip-path: polygon(0 0, 100% 0, calc(100% - 12px) 100%, 0 100%);
}
.sheettabs .new {
    width: 50px;
}
.hscroll {
    display: flex;
    flex: 1;
    max-width: 585px;
    margin-left: auto;
    padding-right: 16px;
    background: #7c9cc9;
}
.hscroll .split {
    width: 7px;
    border: 1px solid #668ab4;
    background: linear-gradient(90deg, #fff 60%, #668ab4 60%);
}
.hscroll button {
    width: 18px;
}
.hscroll .thumb {
    flex: 1;
    border: 1px solid #51658c;
    border-radius: 2px;
    background: linear-gradient(90deg, #66799b 1px, transparent 1px 3px, #66799b 3px 4px, transparent 4px 6px, #66799b 6px 7px, transparent 7px) center / 8px 7px no-repeat, linear-gradient(#f4f7fb, #d8e2f0 50%, #b4c6e0);
}
.hscroll .track {
    width: 56px;
}

/* Status bar */
.status {
    display: flex;
    align-items: center;
    justify-content: space-between;
    height: 22px;
    flex-shrink: 0;
    border-top: 1px solid #567db1;
    background: linear-gradient(#d7e6f9, #c7dcf8 35%, #b3d0f5 40%, #d7e5f7);
}
.ready {
    padding: 3px 9px 3px 7px;
    border-right: 1px solid #9ab4d8;
}
.zoombox {
    display: flex;
    align-items: center;
    height: 100%;
    padding: 0 5px;
    border-left: 1px solid #8fadd6;
    background: linear-gradient(#c4daf8, #8cb3e8);
}
.views {
    display: flex;
    border: 1px solid #8aa8d0;
    background: #cfdff5;
}
.views button {
    width: 18px;
    height: 16px;
}
.views .on {
    background: #fbd584;
}
.percent {
    padding: 0 9px;
    font-size: 12px;
}
.zoombox input {
    appearance: none;
    width: 102px;
    height: 12px;
    margin: 0;
    background: linear-gradient(#eef4fc, #eef4fc) center / 1px 8px no-repeat, linear-gradient(#eef4fc, #eef4fc) center / 100% 1px no-repeat;
}
.zoombox input::-webkit-slider-thumb {
    appearance: none;
    width: 9px;
    height: 13px;
    border: 1px solid #4f6a96;
    border-radius: 1px 1px 5px 5px;
    background: #e4edf9;
}

/* Taskbar */
.taskbar {
    display: flex;
    align-items: center;
    height: 40px;
    flex-shrink: 0;
    border-top: 1px solid #4a5668;
    background: linear-gradient(90deg, #8294ab 58px, #a7bfdb 62px, #a7bfdb calc(100% - 350px), #8193aa calc(100% - 300px));
}
.start {
    width: 54px;
    margin-right: 6px;
}
.task {
    width: 58px;
    height: 38px;
    margin-right: 3px;
    border: 1px solid #50617a;
    border-radius: 2px;
    background: linear-gradient(135deg, #d7e2f0, #a4b9d4 60%, #b4c8e0);
    box-shadow: inset 0 0 0 1px #dbe6f2;
}
.task.stack {
    margin-right: 4px;
    border-right: 4px double #5f718a;
}
.task.plain {
    border: 0;
    background: none;
    box-shadow: none;
    width: 60px;
}
.task.active {
    background: linear-gradient(135deg, #f2f6fb, #cfdcec 50%, #e4ecf6);
    box-shadow: inset 0 0 0 1px #fff;
}
.tray {
    display: flex;
    align-items: center;
    gap: 8px;
    height: 100%;
    margin-left: auto;
    color: #fff;
}
.ime {
    margin-left: -6px;
    font-size: 17px;
}
.up {
    margin: 0 3px;
}
.clock {
    width: 84px;
    margin-left: 2px;
    text-align: center;
    line-height: 17px;
    font-size: 12px;
}
.desktop {
    width: 11px;
    height: 100%;
    margin-left: -4px;
    border: 1px solid #b4c0d0;
    background: linear-gradient(#8a99ae, #55647a);
}
```
